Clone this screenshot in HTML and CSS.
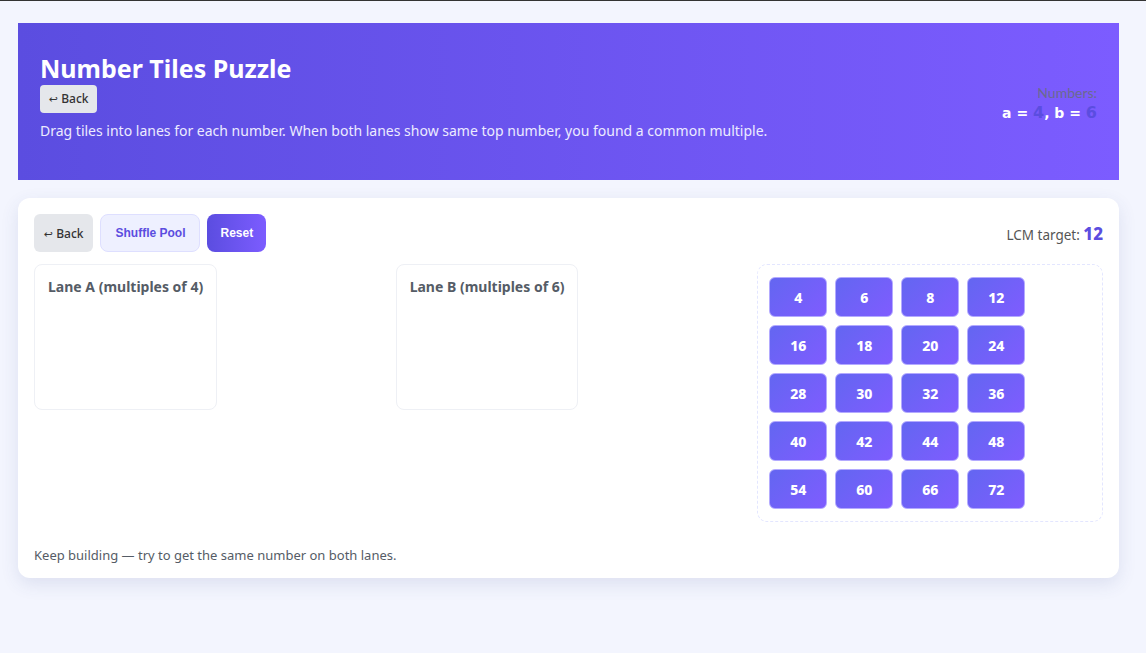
FILE: index.html
```html
<!DOCTYPE html>
<html lang="en">
<head>
<meta charset="utf-8">
<title>Number Tiles Puzzle</title>
<link rel="stylesheet" href="styles.css">
</head>
<body>
<div class="page">
  <header class="hero">
    <div class="hero-main">
      <h1 class="hero-title">Number Tiles Puzzle</h1>
      <button class="btn btn-back btn-small"><span class="back-ico">&#8617;</span> Back</button>
      <p class="hero-desc">Drag tiles into lanes for each number. When both lanes show same top number, you found a common multiple.</p>
    </div>
    <div class="hero-nums">
      <div class="nums-label">Numbers:</div>
      <div class="nums-val">a = <span class="hl">4</span>, b = <span class="hl">6</span></div>
    </div>
  </header>

  <main class="card">
    <div class="controls">
      <div class="ctrl-left">
        <button class="btn btn-back btn-mid"><span class="back-ico">&#8617;</span> Back</button>
        <button class="btn btn-soft">Shuffle Pool</button>
        <button class="btn btn-primary">Reset</button>
      </div>
      <div class="target">LCM target: <strong class="target-num">12</strong></div>
    </div>

    <div class="board">
      <div class="lane"><div class="lane-title">Lane A (multiples of 4)</div></div>
      <div class="lane"><div class="lane-title">Lane B (multiples of 6)</div></div>
      <div class="pool">
        <div class="tile">4</div><div class="tile">6</div><div class="tile">8</div><div class="tile">12</div>
        <div class="tile">16</div><div class="tile">18</div><div class="tile">20</div><div class="tile">24</div>
        <div class="tile">28</div><div class="tile">30</div><div class="tile">32</div><div class="tile">36</div>
        <div class="tile">40</div><div class="tile">42</div><div class="tile">44</div><div class="tile">48</div>
        <div class="tile">54</div><div class="tile">60</div><div class="tile">66</div><div class="tile">72</div>
      </div>
    </div>

    <p class="status">Keep building — try to get the same number on both lanes.</p>
  </main>
</div>
</body>
</html>
```

FILE: styles.css
```css
* { box-sizing: border-box; }
html, body { margin: 0; padding: 0; }
body {
  background: #f3f5fe;
  border-top: 1px solid #333;
  font-family: "Noto Sans", "DejaVu Sans", sans-serif;
  color: #333;
  min-height: 653px;
}
.page {
  padding: 22px 27px 20px 18px;
}
.hero {
  display: flex;
  align-items: center;
  justify-content: space-between;
  background: linear-gradient(90deg, #5b4de0 0%, #7c5cff 100%);
  padding: 26px 22px 36px 22px;
  color: #fff;
  height: 157px;
}
.hero-title {
  margin: 0;
  font-size: 25px;
  font-weight: 700;
  line-height: 30px;
}
.btn {
  border: none;
  cursor: pointer;
  font-family: "Liberation Sans", Arial, sans-serif;
  font-weight: 700;
}
.btn-back {
  background: #e5e7eb;
  color: #333;
  font-family: "Noto Sans", sans-serif;
  font-weight: 500;
}
.back-ico { font-family: "DejaVu Sans", sans-serif; font-size: 0.9em; }
.btn-small {
  height: 28px;
  padding: 0 9px;
  font-size: 12px;
  border-radius: 4px;
  margin-top: 2px;
}
.hero-desc {
  margin: 8px 0 0 0;
  font-size: 14px;
  line-height: 20px;
  color: #ecebff;
}
.hero-nums {
  text-align: right;
  margin-top: 12px;
}
.nums-label {
  font-family: Lato, sans-serif;
  font-size: 14px;
  color: #6b6a8f;
}
.nums-val {
  font-family: "DejaVu Sans", sans-serif;
  font-weight: 700;
  font-size: 14px;
  margin-top: 2px;
}
.hl { color: #5b4de0; font-size: 16px; }

.card {
  margin-top: 18px;
  background: #fff;
  border-radius: 12px;
  box-shadow: 0 6px 18px rgba(60, 70, 140, 0.12);
  padding: 16px 16px 14px 16px;
}
.controls {
  display: flex;
  align-items: center;
  justify-content: space-between;
}
.ctrl-left { display: flex; gap: 7px; }
.btn-mid {
  height: 38px;
  padding: 0 10px;
  font-size: 12px;
  border-radius: 6px;
}
.btn-soft {
  height: 38px;
  padding: 0 14px;
  font-size: 12px;
  border-radius: 8px;
  background: #eef0ff;
  border: 1px solid #dedfff;
  color: #5b4de0;
}
.btn-primary {
  height: 38px;
  padding: 0 13px;
  font-size: 12px;
  border-radius: 8px;
  background: linear-gradient(90deg, #5b4de0, #7c5cff);
  color: #fff;
}
.target {
  font-size: 13.5px;
  color: #555;
}
.target-num {
  color: #5b4de0;
  font-size: 17px;
  font-weight: 800;
}
.board {
  display: grid;
  grid-template-columns: repeat(3, 1fr);
  gap: 16px;
  margin-top: 12px;
  align-items: start;
}
.lane {
  justify-self: start;
  min-height: 146px;
  border: 1px solid #eef0f5;
  border-radius: 8px;
  padding: 12px 13px;
}
.lane-title {
  font-size: 14px;
  font-weight: 700;
  color: #555c66;
}
.pool {
  display: flex;
  flex-wrap: wrap;
  gap: 8px;
  padding: 12px 11px;
  border: 1px dashed #e3e6ff;
  border-radius: 10px;
  align-content: flex-start;
}
.tile {
  width: 58px;
  height: 40px;
  display: flex;
  align-items: center;
  justify-content: center;
  border-radius: 6px;
  border: 1px solid #b3aaff;
  background: linear-gradient(135deg, #6366f1 0%, #7f5cff 100%);
  color: #fff;
  font-family: "Noto Sans", sans-serif;
  font-weight: 800;
  font-size: 14px;
}
.status {
  margin: 24px 0 0 0;
  font-size: 13px;
  color: #555c66;
  line-height: 18px;
}
```
